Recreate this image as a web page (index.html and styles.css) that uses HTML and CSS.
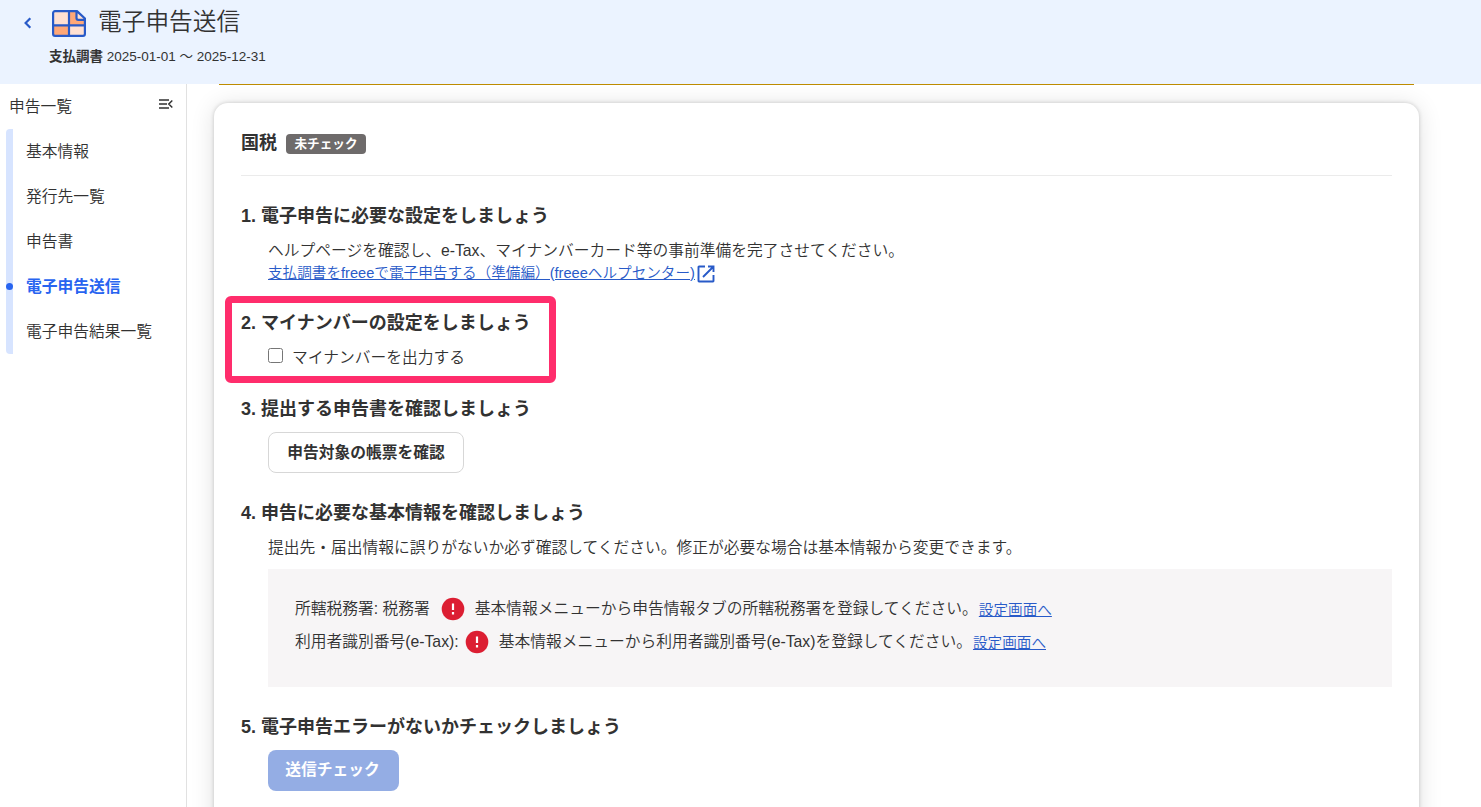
FILE: index.html
```
<!DOCTYPE html>
<html lang="ja">
<head>
    <meta charset="UTF-8">
    <meta name="viewport" content="width=device-width, initial-scale=1.0">
    <title>電子申告送信</title>
    <link rel="stylesheet" href="styles.css">
</head>
<body>
    <header class="page-header">
        <div class="title-row">
            <a href="#" class="back-link" aria-label="戻る">
                <svg width="8" height="12" viewBox="0 0 8 12"><path d="M6.300 1.200 1.600 6l4.700 4.800" fill="none" stroke="#285ac8" stroke-width="2.200"/></svg>
            </a>
            <svg class="title-icon" width="34" height="27" viewBox="0 0 34 27">
                <path d="M3 1h22l8 8v15a2 2 0 0 1-2 2H3a2 2 0 0 1-2-2V3a2 2 0 0 1 2-2z" fill="#ffe0d2"/>
                <path d="M17 1h7v8.500h9v6H17zM1 15.500h16V26H3a2 2 0 0 1-2-2z" fill="#ffa777"/>
                <path d="M3 1.100h22L32.900 8.500V24a1.900 1.900 0 0 1-1.900 1.900H3A1.900 1.900 0 0 1 1.100 24V3A1.900 1.900 0 0 1 3 1.100zM17 1v25M1 15.300h32M24.500 1v7a1.800 1.800 0 0 0 1.800 1.800H33" fill="none" stroke="#285ac8" stroke-width="2.200"/>
            </svg>
            <h1 class="page-title">電子申告送信</h1>
        </div>
        <p class="period"><strong>支払調書</strong> 2025-01-01 ～ 2025-12-31</p>
    </header>

    <div class="layout">
        <nav class="sidebar">
            <div class="sidebar-head">
                <span>申告一覧</span>
                <svg width="15" height="10" viewBox="0 0 15 10"><path d="M1 1h10M1 5h8M1 9h10M14.300 1.500 10.800 5l3.500 3.500" fill="none" stroke="#323232" stroke-width="1.500"/></svg>
            </div>
            <ul class="menu">
                <li>基本情報</li>
                <li>発行先一覧</li>
                <li>申告書</li>
                <li class="active">電子申告送信</li>
                <li>電子申告結果一覧</li>
            </ul>
        </nav>

        <main class="content">
            <div class="notice-edge"></div>
            <div class="card">
                <div class="card-head">
                    <h2>国税</h2>
                    <span class="badge">未チェック</span>
                </div>

                <section class="step">
                    <h3>1. 電子申告に必要な設定をしましょう</h3>
                    <div class="step-body">
                        <p>ヘルプページを確認し、e-Tax、マイナンバーカード等の事前準備を完了させてください。</p>
                        <a href="#" class="link help-link"><span>支払調書をfreeeで電子申告する（準備編）(freeeヘルプセンター)</span><svg width="18" height="18" viewBox="0 0 18 18"><path d="M8 1.500H2a.5.5 0 0 0-.5.5v14a.5.5 0 0 0 .5.5h14a.5.5 0 0 0 .5-.5V10M11 1.500h5.500V7M16 2 6 12" fill="none" stroke="#285ac8" stroke-width="1.900"/></svg></a>
                    </div>
                </section>

                <section class="step highlighted">
                    <h3>2. マイナンバーの設定をしましょう</h3>
                    <div class="step-body">
                        <label class="check"><input type="checkbox">マイナンバーを出力する</label>
                    </div>
                </section>

                <section class="step">
                    <h3>3. 提出する申告書を確認しましょう</h3>
                    <div class="step-body">
                        <button class="btn btn-default">申告対象の帳票を確認</button>
                    </div>
                </section>

                <section class="step">
                    <h3>4. 申告に必要な基本情報を確認しましょう</h3>
                    <div class="step-body">
                        <p>提出先・届出情報に誤りがないか必ず確認してください。修正が必要な場合は基本情報から変更できます。</p>
                        <div class="info-box">
                            <div class="info-row">
                                <span class="info-label">所轄税務署: 税務署</span>
                                <svg class="error-icon wide" width="24" height="24" viewBox="0 0 24 24"><circle cx="12" cy="12" r="11.300" fill="#dc1e32"/><path d="M12 6.500v6.500M12 15v2.500" stroke="#fff" stroke-width="2.200"/></svg>
                                <span class="info-message">基本情報メニューから申告情報タブの所轄税務署を登録してください。</span>
                                <a href="#" class="link">設定画面へ</a>
                            </div>
                            <div class="info-row">
                                <span class="info-label">利用者識別番号(e-Tax):</span>
                                <svg class="error-icon" width="24" height="24" viewBox="0 0 24 24"><circle cx="12" cy="12" r="11.300" fill="#dc1e32"/><path d="M12 6.500v6.500M12 15v2.500" stroke="#fff" stroke-width="2.200"/></svg>
                                <span class="info-message">基本情報メニューから利用者識別番号(e-Tax)を登録してください。</span>
                                <a href="#" class="link">設定画面へ</a>
                            </div>
                        </div>
                    </div>
                </section>

                <section class="step">
                    <h3>5. 電子申告エラーがないかチェックしましょう</h3>
                    <div class="step-body">
                        <button class="btn btn-primary" disabled>送信チェック</button>
                    </div>
                </section>
            </div>
        </main>
    </div>
</body>
</html>
```
FILE: styles.css
```
*,
*::before,
*::after {
    margin: 0;
    padding: 0;
    box-sizing: border-box;
}

body {
    height: 100vh;
    overflow: hidden;
    display: flex;
    flex-direction: column;
    font-family: "Liberation Sans", "Noto Sans CJK JP", sans-serif;
    font-size: 15.75px;
    font-weight: 350;
    line-height: 24px;
    color: #323232;
    background: #fff;
}

.page-header {
    height: 84px;
    flex-shrink: 0;
    padding: 4px 24px;
    background: #ebf3ff;
}

.title-row {
    display: flex;
    align-items: center;
    height: 38px;
}

.back-link {
    display: flex;
    width: 28px;
}

.page-title {
    margin: -2px 0 0 12px;
    font-size: 23.7px;
    font-weight: 350;
    line-height: 36px;
}

.period {
    margin-left: 25px;
    padding-top: 5px;
    font-size: 13.5px;
    line-height: 20px;
}

.layout {
    display: flex;
    flex: 1;
    min-height: 0;
}

.sidebar {
    width: 187px;
    flex-shrink: 0;
    padding: 11px 13px 0 6px;
    border-right: 1px solid #e1e1e1;
}

.sidebar-head {
    display: flex;
    justify-content: space-between;
    padding-left: 3px;
}

.sidebar-head svg {
    margin-top: 4px;
}

.menu {
    margin-top: 10px;
    list-style: none;
    background: linear-gradient(#d7e4ff, #d7e4ff) no-repeat;
    background-size: 7px 100%;
    border-radius: 4px;
}

.menu li {
    display: flex;
    align-items: center;
    height: 45px;
    padding-left: 20px;
}

.menu .active {
    padding-left: 0;
    color: #2864f0;
    font-weight: bold;
}

.menu .active::before {
    content: "";
    width: 7px;
    height: 7px;
    margin-right: 13px;
    border-radius: 50%;
    background: #2864f0;
}

.content {
    flex: 1;
    padding: 0 62px 0 27px;
    overflow: hidden;
}

.notice-edge {
    height: 1px;
    margin: 0 5px 18px;
    background: #be8c00;
}

.card {
    height: 760px;
    padding: 28px 27px;
    border-radius: 14px;
    background: #fff;
    box-shadow: 0 0 4px rgba(0, 0, 0, 0.18), 0 2px 24px rgba(0, 0, 0, 0.12);
}

.card-head {
    display: flex;
    align-items: flex-start;
    gap: 9px;
    height: 45px;
    border-bottom: 1px solid #ebebeb;
}

.card-head h2 {
    font-size: 18px;
    line-height: 24px;
}

.badge {
    width: 80px;
    height: 20px;
    margin-top: 3px;
    border-radius: 4px;
    background: #6e6b6b;
    color: #fff;
    font-size: 12.6px;
    font-weight: bold;
    line-height: 20px;
    text-align: center;
}

.step {
    margin-top: 28px;
}

.step h3 {
    margin-bottom: 11px;
    font-size: 18px;
    line-height: 24px;
}

.step-body {
    padding-left: 27px;
}

.link {
    color: #285ac8;
    font-size: 14.625px;
}

.help-link {
    display: flex;
    align-items: center;
    gap: 2px;
    height: 22px;
    margin-top: -1px;
    line-height: 22px;
}

.help-link svg {
    margin-top: 2px;
}

/* marker frame round the setting being explained */
.highlighted {
    position: relative;
    margin: 27px 0;
}

.highlighted::after {
    content: "";
    position: absolute;
    top: -15px;
    left: -16px;
    width: 331px;
    height: 87px;
    border: 7px solid #ff2d6c;
    border-radius: 6px;
}

.highlighted + .step {
    margin-top: 27px;
}

.check {
    display: flex;
    align-items: center;
    height: 24px;
}

.check input {
    width: 15px;
    height: 15px;
    margin: 0 9px 5px 0;
}

.btn {
    display: block;
    height: 41px;
    padding-bottom: 3px;
    border-radius: 8px;
    font-family: inherit;
    font-size: 15.75px;
    font-weight: bold;
}

.btn-default {
    width: 196px;
    border: 1px solid #d7d7d7;
    background: #fff;
    color: #323232;
}

.btn-primary {
    width: 131px;
    border: none;
    padding-right: 2px;
    padding-bottom: 4px;
    background: #94ade4;
    color: #fff;
}

.info-box {
    display: flex;
    flex-direction: column;
    gap: 9px;
    height: 118px;
    margin-top: 9px;
    padding: 28px 27px;
    background: #f7f5f6;
}

.info-row {
    display: flex;
    align-items: center;
    height: 24px;
}

.info-row .link {
    margin-top: 1px;
}

.error-icon {
    margin: 0 10px 0 6px;
}

.error-icon.wide {
    margin-left: 11px;
}

.info-message {
    margin: -1px 1px 0 0;
}
```
